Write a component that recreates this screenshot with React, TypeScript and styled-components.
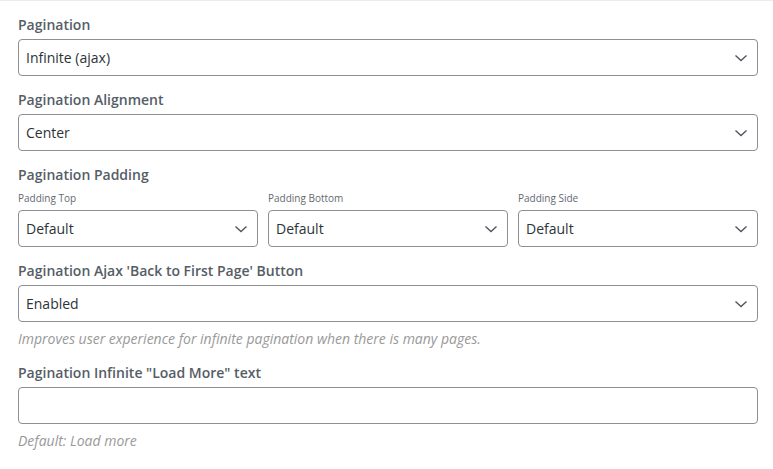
import React from 'react';
import styled, { createGlobalStyle } from 'styled-components';

const GlobalStyle = createGlobalStyle`
  html, body {
    margin: 0;
    padding: 0;
    background: #fff;
  }
  body {
    font-family: "Open Sans", "Liberation Sans", sans-serif;
  }
`;

const Panel = styled.div`
  border-top: 1px solid #ececec;
  padding: 14px 15px 0 18px;
  width: 740px;
`;

const Field = styled.div`
  display: flex;
  flex-direction: column;
  margin-bottom: 14px;
`;

const Label = styled.div`
  font-size: 14px;
  line-height: 20px;
  font-weight: 600;
  color: #555d66;
  margin-bottom: 4px;
`;

const Columns = styled.div`
  display: grid;
  grid-template-columns: repeat(3, 1fr);
  gap: 10px;
`;

const Column = styled.div`
  display: flex;
  flex-direction: column;
`;

const SubLabel = styled.div`
  font-size: 10px;
  line-height: 14px;
  color: #646970;
  margin: 2px 0 5px;
`;

const SelectBox = styled.div`
  position: relative;
  height: 37px;
  box-sizing: border-box;
  border: 1px solid #8c8f94;
  border-radius: 4px;
  display: flex;
  align-items: center;
  padding: 0 30px 0 7px;
  font-size: 14px;
  color: #2c3338;
  background: #fff;
`;

const TextInput = styled.div`
  height: 37px;
  box-sizing: border-box;
  border: 1px solid #8c8f94;
  border-radius: 4px;
  background: #fff;
`;

const Chevron = styled.svg`
  position: absolute;
  right: 8px;
  top: 50%;
  margin-top: -8px;
`;

const Help = styled.div`
  font-size: 14px;
  line-height: 20px;
  font-style: italic;
  color: #999;
  margin-top: 7px;
`;

const Select = ({ value }: { value: string }) => (
  <SelectBox>
    {value}
    <Chevron width="16" height="16" viewBox="0 0 16 16" fill="none">
      <path d="M2.5 5.5 L8 10.5 L13.5 5.5" stroke="#50575e" strokeWidth="1.4" />
    </Chevron>
  </SelectBox>
);

const paddings = ['Padding Top', 'Padding Bottom', 'Padding Side'];

export default function App() {
  return (
    <>
      <GlobalStyle />
      <Panel>
        <Field>
          <Label>Pagination</Label>
          <Select value="Infinite (ajax)" />
        </Field>
        <Field>
          <Label>Pagination Alignment</Label>
          <Select value="Center" />
        </Field>
        <Field>
          <Label>Pagination Padding</Label>
          <Columns>
            {paddings.map((p) => (
              <Column key={p}>
                <SubLabel>{p}</SubLabel>
                <Select value="Default" />
              </Column>
            ))}
          </Columns>
        </Field>
        <Field>
          <Label>Pagination Ajax 'Back to First Page' Button</Label>
          <Select value="Enabled" />
          <Help>Improves user experience for infinite pagination when there is many pages.</Help>
        </Field>
        <Field>
          <Label>Pagination Infinite "Load More" text</Label>
          <TextInput />
          <Help>Default: Load more</Help>
        </Field>
      </Panel>
    </>
  );
}
